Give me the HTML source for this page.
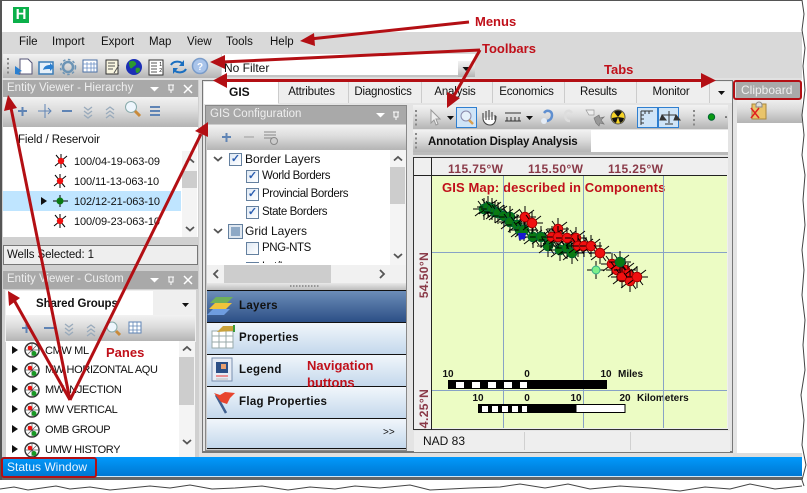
<!DOCTYPE html>
<html><head><meta charset="utf-8"><style>
html,body{margin:0;padding:0;background:#fff}
#p{position:relative;width:807px;height:493px;overflow:hidden;background:#fff;font-family:"Liberation Sans",sans-serif;font-size:11.5px;color:#111}
#p div{position:absolute;box-sizing:border-box}
.t{white-space:nowrap;line-height:14px}
.tb{background:linear-gradient(#f2f2f2,#dcdcdc 45%,#b4b4b4)}
.ti{background:#a9a9a9;color:#eee;font-size:11.5px;line-height:17px;padding-left:4px;white-space:nowrap}
.tab{top:82px;height:21px;background:#eee;border-left:1px solid #ccc;text-align:center;line-height:21px;font-size:11.5px;letter-spacing:-.2px;padding-right:4px}
.nav{left:207px;width:199px;height:32px;background:linear-gradient(#f1f6fb,#c4d8ec);border-bottom:1px solid #111;font-weight:bold;font-size:11.5px;letter-spacing:.3px;line-height:30px;padding-left:32px}
.red{color:#c0101a;font-weight:bold;white-space:nowrap;font-size:13px;line-height:15px}
.ax{color:#8a3a48;font-weight:bold;font-size:12px;letter-spacing:.4px;line-height:14px;white-space:nowrap}
.sc{font-weight:bold;font-size:10px;line-height:12px;white-space:nowrap;color:#111;text-align:center}
.cb{width:13px;height:13px;border:1px solid #64809f;background:linear-gradient(135deg,#dfe9f4,#fff);color:#2a5db0;font-size:11px;font-weight:bold;line-height:11px;text-align:center}
.li{font-size:11px;letter-spacing:-.1px}
.cu{font-size:11px;letter-spacing:-.35px}
.su{letter-spacing:-.4px}
svg{position:absolute;left:0;top:0;overflow:visible}
</style></head><body><div id="p">

<!-- window frame -->
<div style="left:0;top:0;width:802px;height:1px;background:#555"></div>
<div style="left:0;top:0;width:2px;height:480px;background:#555"></div>
<div style="left:13px;top:7px;width:16px;height:16px;background:#0bb04a;color:#fff;font-weight:bold;font-size:15px;line-height:16px;text-align:center">H</div>

<!-- menu & toolbar band -->
<div style="left:2px;top:32px;width:800px;height:48px;background:#d9d9d9"></div>
<div class="t" style="left:19px;top:35px">File</div>
<div class="t" style="left:52px;top:35px">Import</div>
<div class="t" style="left:101px;top:35px">Export</div>
<div class="t" style="left:149px;top:35px">Map</div>
<div class="t" style="left:187px;top:35px">View</div>
<div class="t" style="left:226px;top:35px">Tools</div>
<div class="t" style="left:270px;top:35px">Help</div>

<div class="tb" style="left:3px;top:54px;width:218px;height:24px"></div>
<div style="left:222px;top:54px;width:253px;height:23px;background:#fff;border-bottom:2px solid #c4c4c4"></div>
<div class="t" style="left:224px;top:61px;font-size:12px">No Filter</div>
<div class="tb" style="left:458px;top:61px;width:17px;height:16px"></div>

<!-- main bg -->
<div style="left:2px;top:78px;width:800px;height:379px;background:#e1e1e1"></div>

<!-- Left pane hierarchy -->
<div style="left:2px;top:80px;width:197px;height:377px;background:#d0d0d0"></div>
<div class="ti" style="left:3px;top:80px;width:195px;height:17px">Entity Viewer - Hierarchy</div>
<div class="tb" style="left:3px;top:97px;width:195px;height:30px"></div>
<div style="left:3px;top:127px;width:195px;height:110px;background:#fff"></div>
<div class="t" style="left:18px;top:133px;letter-spacing:-.1px">Field / Reservoir</div>
<div style="left:3px;top:191px;width:178px;height:20px;background:#bfe5ff"></div>
<div style="left:182px;top:151px;width:15px;height:86px;background:#f4f4f4"></div>
<div style="left:182px;top:171px;width:15px;height:17px;background:#cdcdcd"></div>
<div class="t li" style="left:74px;top:155px">100/04-19-063-09</div>
<div class="t li" style="left:74px;top:175px">100/11-13-063-10</div>
<div class="t li" style="left:74px;top:195px">102/12-21-063-10</div>
<div class="t li" style="left:74px;top:215px">100/09-23-063-10</div>
<div style="left:3px;top:245px;width:195px;height:20px;background:#eee;border:1px solid #777"></div>
<div class="t" style="left:7px;top:248px;letter-spacing:-.1px">Wells Selected: 1</div>

<!-- Left pane custom -->
<div class="ti" style="left:3px;top:271px;width:195px;height:18px">Entity Viewer - Custom</div>
<div style="left:5px;top:290px;width:191px;height:52px;background:#efefef"></div>
<div style="left:6px;top:291px;width:147px;height:24px;background:#fff"></div>
<div class="t" style="left:36px;top:297px;font-weight:bold;font-size:11.5px;letter-spacing:-.1px">Shared Groups</div>
<div class="tb" style="left:6px;top:315px;width:189px;height:26px"></div>
<div style="left:6px;top:341px;width:189px;height:116px;background:#fff"></div>
<div style="left:179px;top:341px;width:16px;height:116px;background:#f4f4f4"></div>
<div style="left:179px;top:357px;width:15px;height:48px;background:#cdcdcd"></div>
<div class="t cu" style="left:45px;top:344px">CMW ML</div>
<div class="t cu" style="left:45px;top:363px">MW HORIZONTAL AQU</div>
<div class="t cu" style="left:45px;top:383px">MW INJECTION</div>
<div class="t cu" style="left:45px;top:403px">MW VERTICAL</div>
<div class="t cu" style="left:45px;top:423px">OMB GROUP</div>
<div class="t cu" style="left:45px;top:443px;height:13px;overflow:hidden">UMW HISTORY</div>

<!-- Status -->
<div style="left:2px;top:457px;width:800px;height:19px;background:linear-gradient(#0199fb,#0078d2)"></div>
<div style="left:2px;top:476px;width:800px;height:1px;background:#cfe6f5"></div>
<div style="left:2px;top:477px;width:800px;height:3px;background:#666"></div>
<div class="t" style="left:7px;top:460px;color:#e8f4ff;font-size:12px">Status Window</div>

<!-- Center frame -->
<div style="left:202px;top:80px;width:531px;height:373px;background:#e4e4e4;border:1px solid #777;border-width:1px 1px 2px 1px"></div>
<div style="left:204px;top:82px;width:74px;height:22px;background:#fff"></div>
<div class="t" style="left:229px;top:85px;font-weight:bold;font-size:12px">GIS</div>
<div class="tab" style="left:278px;width:70px">Attributes</div>
<div class="tab" style="left:348px;width:73px">Diagnostics</div>
<div class="tab" style="left:421px;width:71px">Analysis</div>
<div class="tab" style="left:492px;width:72px">Economics</div>
<div class="tab" style="left:564px;width:72px">Results</div>
<div class="tab" style="left:636px;width:73px">Monitor</div>
<div class="tab" style="left:709px;width:23px"></div>

<!-- GIS config -->
<div style="left:205px;top:105px;width:202px;height:346px;background:#ccc;border:1px solid #888"></div>
<div class="ti" style="left:206px;top:106px;width:200px;height:18px">GIS Configuration</div>
<div class="tb" style="left:207px;top:125px;width:199px;height:25px"></div>
<div style="left:207px;top:150px;width:183px;height:115px;background:#fff"></div>
<div style="left:207px;top:150px;width:183px;height:113px;overflow:hidden">
 <div class="cb" style="left:22px;top:3px">✓</div>
 <div class="t" style="left:38px;top:2px;font-size:12px">Border Layers</div>
 <div class="cb" style="left:39px;top:20px">✓</div>
 <div class="t su" style="left:55px;top:19px">World Borders</div>
 <div class="cb" style="left:39px;top:38px">✓</div>
 <div class="t su" style="left:55px;top:37px">Provincial Borders</div>
 <div class="cb" style="left:39px;top:56px">✓</div>
 <div class="t su" style="left:55px;top:55px">State Borders</div>
 <div class="cb" style="left:22px;top:75px;background:#8ea9c6;border:2px solid #dfe7f0;outline:1px solid #64809f"></div>
 <div class="t" style="left:38px;top:74px;font-size:12px">Grid Layers</div>
 <div class="cb" style="left:39px;top:92px"></div>
 <div class="t su" style="left:55px;top:91px">PNG-NTS</div>
 <div class="cb" style="left:39px;top:112px">✓</div>
 <div class="t su" style="left:55px;top:110px">Lat/Long</div>
</div>
<div style="left:390px;top:150px;width:16px;height:115px;background:#f4f4f4"></div>
<div style="left:390px;top:167px;width:15px;height:37px;background:#cdcdcd"></div>
<div style="left:207px;top:265px;width:199px;height:18px;background:#f1f1f1"></div>
<div style="left:224px;top:265px;width:107px;height:18px;background:#cdcdcd"></div>
<div style="left:207px;top:283px;width:199px;height:7px;background:linear-gradient(#e8e8e8,#bdbdbd)"></div>
<div style="left:207px;top:290px;width:199px;height:1px;background:#111"></div>
<div class="nav" style="top:291px;background:linear-gradient(#6c8db8,#2c4f86)">Layers</div>
<div class="nav" style="top:323px">Properties</div>
<div class="nav" style="top:355px">Legend</div>
<div class="nav" style="top:387px">Flag Properties</div>
<div class="nav" style="top:419px;height:30px"></div>
<div class="t" style="left:383px;top:426px;font-size:10px">&gt;&gt;</div>

<!-- GIS right -->
<div class="tb" style="left:413px;top:105px;width:315px;height:24px"></div>
<div style="left:456px;top:107px;width:21px;height:21px;background:#cfe4f7;border:1px solid #2f7fd0"></div>
<div style="left:637px;top:107px;width:21px;height:21px;background:#cfe4f7;border:1px solid #2f7fd0"></div>
<div style="left:658px;top:107px;width:21px;height:21px;background:#cfe4f7;border:1px solid #2f7fd0"></div>
<div style="left:413px;top:130px;width:315px;height:22px;background:#fff"></div>
<div class="tb" style="left:413px;top:130px;width:178px;height:22px"></div>
<div class="t" style="left:428px;top:135px;font-weight:bold;font-size:11.5px;letter-spacing:-.2px">Annotation Display Analysis</div>
<div style="left:413px;top:152px;width:315px;height:3px;background:#bbb"></div>

<!-- Map -->
<div style="left:413px;top:157px;width:315px;height:273px;background:#efefef;border:1px solid #333;border-width:1px 0 1px 1px"></div>
<div style="left:432px;top:176px;width:295px;height:252px;background:#ecfcc4;overflow:hidden"></div>
<div style="left:431px;top:157px;width:1px;height:273px;background:#222"></div>
<div style="left:414px;top:175px;width:313px;height:1px;background:#222"></div>
<div class="ax" style="left:448px;top:162px">115.75°W</div>
<div class="ax" style="left:528px;top:162px">115.50°W</div>
<div class="ax" style="left:608px;top:162px">115.25°W</div>
<div style="left:414px;top:176px;width:17px;height:253px;overflow:hidden">
 <div class="ax" style="left:-20px;top:92px;width:60px;height:14px;text-align:center;transform:rotate(-90deg)">54.50°N</div>
 <div class="ax" style="left:-20px;top:229px;width:60px;height:14px;text-align:center;transform:rotate(-90deg)">54.25°N</div>
</div>
<div class="red" style="left:442px;top:180px;font-size:13px;letter-spacing:.12px">GIS Map: described in Components</div>

<div class="sc" style="left:438px;top:369px;width:20px">10</div>
<div class="sc" style="left:517px;top:369px;width:20px">0</div>
<div class="sc" style="left:596px;top:369px;width:20px">10</div>
<div class="sc" style="left:618px;top:369px">Miles</div>
<div class="sc" style="left:468px;top:393px;width:20px">10</div>
<div class="sc" style="left:517px;top:393px;width:20px">0</div>
<div class="sc" style="left:566px;top:393px;width:20px">10</div>
<div class="sc" style="left:615px;top:393px;width:20px">20</div>
<div class="sc" style="left:637px;top:393px">Kilometers</div>

<!-- map status -->
<div style="left:414px;top:431px;width:316px;height:21px;background:#eee"></div>
<div style="left:524px;top:432px;width:1px;height:18px;background:#d0d0d0"></div>
<div style="left:630px;top:432px;width:1px;height:18px;background:#d0d0d0"></div>
<div class="t" style="left:423px;top:434px;font-size:12px">NAD 83</div>

<!-- Clipboard -->
<div style="left:733px;top:80px;width:69px;height:373px;background:#fff"></div>
<div style="left:733px;top:80px;width:4px;height:373px;background:#e4e4e4"></div>
<div style="left:733px;top:453px;width:69px;height:4px;background:#ddd"></div>
<div style="left:736px;top:82px;width:65px;height:16px;background:#a9a9a9;color:#eee;font-size:12px;line-height:16px;padding-left:5px">Clipboard</div>
<div class="tb" style="left:737px;top:98px;width:65px;height:25px"></div>

<svg width="807" height="493" viewBox="0 0 807 493">
<defs>
 <g id="g"><path d="M-9 7L9-7M-6-8L6 8M0-11V11M-11 0H11" stroke="#000" stroke-width="1"/><circle r="4.800" fill="#0a7a12" stroke="#063"/></g>
 <g id="r"><path d="M-9 7L9-7M-6-8L6 8M0-11V11M-11 0H11" stroke="#000" stroke-width="1"/><circle r="4.800" fill="#f01010" stroke="#a00"/></g>
 <g id="ws"><path d="M-6 5L6-5M-5-6L5 6M0-7V7" stroke="#000"/><circle r="3.200" fill="#f01010"/></g>
 <g id="grp"><circle r="7" fill="#fff" stroke="#333" stroke-width="1.400"/><path d="M-5-5L5 5M5-5L-5 5M0-7V7M-7 0H7" stroke="#555" stroke-width=".7"/><circle cx="-2" cy="-2" r="2.300" fill="#e11"/><circle cx="2" cy="3.500" r="2.500" fill="#1a9a25"/></g>
 <path id="ra" d="M0 0L6 4L0 8Z" fill="#111"/>
 <path id="dn" d="M0 0L4 3.500L8 0" fill="none" stroke="#555" stroke-width="1.800"/>
 <path id="up" d="M0 3.500L4 0L8 3.500" fill="none" stroke="#555" stroke-width="1.800"/>
 <path id="tri" d="M0 0H9L4.500 4.500Z" fill="#fff"/>
 <path id="tb" d="M0 0H7L3.500 4Z" fill="#111"/>
</defs>

<!-- grip dots main toolbar -->
<path d="M8 58V76" stroke="#888" stroke-width="2" stroke-dasharray="2 2.500"/>
<!-- main toolbar icons -->
<path d="M20 59h8l4 4v11H20z" fill="#fff" stroke="#557"/><path d="M15 66l7 5-3 1 1 3-5-1z" fill="#2a7fd0"/>
<rect x="39" y="62" width="14" height="12" fill="#e5f0fa" stroke="#3b7cb5" stroke-width="1.500"/><path d="M43 70c1-4 4-5 7-5v-2l4 4-4 4v-2c-3 0-5 0-7 1z" fill="#2a7fd0"/>
<circle cx="68" cy="67" r="5" fill="none" stroke="#6c94b5" stroke-width="2.500"/><circle cx="68" cy="67" r="7.500" fill="none" stroke="#6c94b5" stroke-width="1.500" stroke-dasharray="2.500 2.500"/>
<rect x="83" y="60" width="14" height="12" fill="#fff" stroke="#4a6fa5"/><path d="M83 64h14M83 68h14M87 62v10M91 62v10M94 62v10" stroke="#6a8fc5" stroke-width=".8"/>
<rect x="106" y="60" width="12" height="14" fill="#f8f5e0" stroke="#333"/><path d="M108 63h7M108 66h7M108 69h5M114 73l5-8" stroke="#555"/>
<circle cx="134" cy="67" r="8" fill="#1b2fb5"/><path d="M129 62c3-2 6-1 7 1s-2 3-4 5-3-3-3-6zM136 68c3-1 4 0 4 2s-2 3-3 3-2-3-1-5z" fill="#2d9a2d"/>
<rect x="149" y="60" width="14" height="15" fill="#fff" stroke="#333"/><path d="M151 63h6M151 66h6M151 69h6M151 72h6" stroke="#555"/><text x="162" y="66" font-size="5" font-family="Liberation Sans" text-anchor="end">1</text><text x="162" y="72" font-size="5" font-family="Liberation Sans" text-anchor="end">2</text>
<path d="M171 65c2-4 8-4 11-2M186 69c-2 4-8 4-11 2" fill="none" stroke="#1b6fc0" stroke-width="2"/><path d="M184 60v6h-5zM173 74v-6h5z" fill="#1b6fc0"/>
<circle cx="200" cy="66" r="7.500" fill="#a9c4ea" stroke="#7a9cc9" stroke-width="1.500"/><text x="200" y="70" font-size="10" font-weight="bold" fill="#fff" font-family="Liberation Sans" text-anchor="middle">?</text>
<use href="#tb" x="462.500" y="67"/>

<!-- Title bar glyphs -->
<use href="#tri" x="150" y="87"/><path d="M168 85h6M169 85v5h4v-5M171 90v3" stroke="#fff" fill="none"/><path d="M184 85l8 8M192 85l-8 8" stroke="#fff" stroke-width="1.500"/>
<use href="#tri" x="150" y="278"/><path d="M168 277h6M169 277v5h4v-5M171 282v3" stroke="#fff" fill="none"/><path d="M184 276l8 8M192 276l-8 8" stroke="#fff" stroke-width="1.500"/>
<use href="#tri" x="376" y="113"/><path d="M393 112h6M394 112v5h4v-5M396 117v3" stroke="#fff" fill="none"/>
<use href="#tb" x="182" y="303"/>
<use href="#tb" x="718" y="91"/>

<!-- Hierarchy toolbar -->
<g stroke="#5f84b5" stroke-width="2" fill="none">
<path d="M18 111h9M22.500 107v9"/><path d="M62 111h10"/><path d="M150 107h10M150 111h10M150 115h10"/>
<path d="M38 111h13M45 104v14M48 108l3 3-3 3" stroke-width="1"/>
<path d="M84 107l4 3 4-3M84 111l4 3 4-3M84 115l4 3 4-3" stroke="#9ab" stroke-width="1.300"/>
<path d="M106 110l4-3 4 3M106 114l4-3 4 3M106 118l4-3 4 3" stroke="#9ab" stroke-width="1.300"/>
</g>
<circle cx="131" cy="107" r="5.500" fill="#eef6fd" stroke="#8aa"/><path d="M135 111l5 5" stroke="#c98a3a" stroke-width="3"/>
<!-- Hierarchy list -->
<use href="#ws" x="61" y="161"/><use href="#ws" x="60" y="181"/><use href="#ws" x="60" y="221"/>
<path d="M53 201H68M60 195V207" stroke="#000"/><circle cx="60" cy="201" r="3.500" fill="#0a7a12"/>
<use href="#ra" x="41" y="197"/>
<use href="#up" x="186" y="159"/><use href="#dn" x="186" y="227"/>

<!-- Custom toolbar -->
<path d="M22 328h9M26.500 324v9M44 328h10" stroke="#5f84b5" stroke-width="2" fill="none"/>
<path d="M65 324l4 3 4-3M65 328l4 3 4-3M65 332l4 3 4-3M87 328l4-3 4 3M87 332l4-3 4 3M87 336l4-3 4 3" stroke="#9ab" stroke-width="1.300" fill="none"/>
<circle cx="112" cy="327" r="5" fill="#eef6fd" stroke="#8aa"/><path d="M116 331l4 4" stroke="#c98a3a" stroke-width="3"/>
<rect x="129" y="322" width="12" height="11" fill="#fff" stroke="#5f84b5"/><path d="M129 326h12M129 330h12M133 322v11M137 322v11" stroke="#5f84b5" stroke-width=".8"/>
<!-- custom rows -->
<use href="#ra" x="12" y="346"/><use href="#grp" x="32" y="350"/>
<use href="#ra" x="12" y="365"/><use href="#grp" x="32" y="370"/>
<use href="#ra" x="12" y="385"/><use href="#grp" x="32" y="390"/>
<use href="#ra" x="12" y="405"/><use href="#grp" x="32" y="410"/>
<use href="#ra" x="12" y="425"/><use href="#grp" x="32" y="430"/>
<use href="#ra" x="12" y="445"/><use href="#grp" x="32" y="450"/>
<use href="#up" x="183" y="347"/><use href="#dn" x="183" y="440"/>

<!-- GIS config toolbar -->
<path d="M222 137h9M226.500 133v9" stroke="#5f84b5" stroke-width="2"/><path d="M244 137h10" stroke="#bbb" stroke-width="2"/>
<path d="M264 132h12M264 135h12M264 138h12" stroke="#888"/><circle cx="274" cy="141" r="3.500" fill="#ccc" stroke="#888"/>
<!-- tree chevrons / scroll -->
<use href="#dn" x="214" y="157"/><use href="#dn" x="214" y="229"/>
<use href="#up" x="394" y="157"/><use href="#dn" x="394" y="254"/>
<path d="M218 270l-4 4 4 4M380 270l4 4-4 4" fill="none" stroke="#555" stroke-width="1.800"/>
<path d="M290 286h30" stroke="#555" stroke-dasharray="1.500 1.500"/>

<!-- nav icons -->
<path d="M216 297h17l-6 6h-17z" fill="#6fb05a"/><path d="M215 303h17l-6 6h-17z" fill="#efc33c"/><path d="M213 309h17l-6 6h-17z" fill="#6e9de0"/>
<rect x="212" y="331" width="21" height="17" fill="#fff" stroke="#9aa"/><path d="M212 336h21M212 342h21M219 331v17M226 331v17" stroke="#9aa"/><path d="M217 332l6-6h10v5z" fill="#c9a23c"/><rect x="233" y="325" width="2" height="7" fill="#3a9a3a"/>
<rect x="212" y="358" width="20" height="23" fill="#e7ecf5" stroke="#7a8fb0"/><rect x="216" y="362" width="12" height="11" fill="#2c4f86"/><rect x="221" y="364" width="5" height="5" fill="#e9a070"/><path d="M216 376h12" stroke="#e33" stroke-width="1"/><path d="M216 379h12" stroke="#bbb"/>
<path d="M226 413L216 395" stroke="#3f5f8f" stroke-width="2.500"/><path d="M214 393l6 2 5-3 10 1-5 5-3 6-6-2z" fill="#e8452e"/>

<!-- GIS toolbar -->
<path d="M416 110V126" stroke="#888" stroke-width="2" stroke-dasharray="2 2.500"/><path d="M416 133V149" stroke="#888" stroke-width="2" stroke-dasharray="2 2.500"/>
<path d="M431 110v13l3-3 2 5 2-1-2-5h4z" fill="#eee" stroke="#999"/><use href="#tb" x="447" y="116"/>
<circle cx="466" cy="116" r="5" fill="#e5f0fa" stroke="#88a"/><path d="M469 120l4 4" stroke="#d9a050" stroke-width="2.500"/>
<path d="M483 118v-5M486 120v-9M489 120v-10M492 120v-8M495 120v-5M483 118c0 4 3 7 7 7s6-3 6-9" fill="#fff" stroke="#444" stroke-width="1.100"/>
<path d="M505 113h16M505 121h16M507 117v4M511 117v4M515 117v4M519 117v4" stroke="#333"/><use href="#tb" x="526" y="116"/>
<path d="M544 113c3-4 8-2 8 2s-3 6-6 6" fill="none" stroke="#5f8fd0" stroke-width="2.500"/><circle cx="544" cy="121" r="3" fill="#e5ecf5"/>
<path d="M572 113c-3-4-7-2-7 2s2 6 5 6" fill="none" stroke="#ddd" stroke-width="2.500"/>
<path d="M586 110h8v5h-5z" fill="#eee" stroke="#999" stroke-width=".7"/><path d="M594 118l5-3 1 3 4-1-3 3 3 4-4-1-1 3-3-3z" fill="#999" stroke="#777" stroke-width=".7"/>
<circle cx="618" cy="117" r="7" fill="#f5d327" stroke="#555"/><path d="M618 117l-4-5a6 6 0 0 1 8 0zM618 117l6 1a6 6 0 0 1-4 5zM618 117l-6 1a6 6 0 0 0 4 5z" fill="#111"/>
<path d="M641 111v14M641 111h12M641 115h3M641 119h3M641 123h3M645 111v3M649 111v3" stroke="#333" fill="none"/>
<path d="M662 115h14M669 111v12M665 124h8M662 115l-2 5h6zM676 115l-2 5h6z" stroke="#333" fill="#333"/>
<path d="M694 110V126" stroke="#888" stroke-width="2" stroke-dasharray="2 2.500"/>
<circle cx="711.500" cy="117" r="3.200" fill="#0a9a12" stroke="#063"/><circle cx="726" cy="117" r=".8" fill="#111"/>

<!-- clipboard icon -->
<rect x="752" y="104" width="14" height="15" fill="#e9c46a" stroke="#a9863c"/><path d="M756 105a3 3 0 0 1 6 0v2h-6z" fill="#ddd" stroke="#888"/><path d="M751 108l8 10M759 108l-8 10" stroke="#e02020" stroke-width="1.500"/>

<!-- map grid -->
<path d="M503.500 176V428M583.500 176V428M663.500 176V428M432 252.500H727M432 390.500H727" stroke="#88a2c6"/>
<!-- scale bars -->
<rect x="448" y="380" width="159" height="9" fill="#000"/>
<path d="M456 382h8v6h-8zM472 382h8v6h-8zM488 382h8v6h-8zM504 382h8v6h-8zM520 382h7v6h-7z" fill="#fff"/>
<rect x="478" y="404" width="98" height="9" fill="#000"/><rect x="576" y="404.500" width="49" height="8" fill="#fff" stroke="#000"/>
<path d="M482 406h6v6h-6zM492 406h6v6h-6zM502 406h6v6h-6zM512 406h6v6h-6zM522 406h5v6h-5z" fill="#fff"/>

<!-- wells -->
<use href="#g" x="484" y="209"/><use href="#g" x="488" y="207"/><use href="#g" x="492" y="209"/><use href="#g" x="495" y="212"/><use href="#g" x="498" y="213"/><use href="#g" x="504" y="216"/><use href="#g" x="510" y="217"/><use href="#g" x="510" y="222"/><use href="#g" x="517" y="225"/><use href="#g" x="520" y="230"/><use href="#g" x="524" y="230"/><use href="#g" x="533" y="237"/><use href="#g" x="541" y="237"/><use href="#g" x="548" y="246"/><use href="#g" x="550" y="240"/><use href="#g" x="560" y="250"/><use href="#g" x="567" y="248"/><use href="#g" x="572" y="253"/>
<use href="#r" x="525" y="217"/><use href="#r" x="532" y="223"/><use href="#r" x="558" y="229"/><use href="#r" x="552" y="237"/><use href="#r" x="558" y="237"/><use href="#r" x="567" y="238"/><use href="#r" x="576" y="238"/><use href="#r" x="578" y="246"/><use href="#r" x="584" y="246"/><use href="#r" x="591" y="246"/><use href="#r" x="600" y="253"/><use href="#r" x="612" y="264"/><use href="#r" x="617" y="270"/><use href="#r" x="625" y="270"/><use href="#r" x="628" y="274"/><use href="#r" x="622" y="277"/><use href="#r" x="630" y="281"/><use href="#r" x="637" y="277"/>
<use href="#g" x="620" y="262"/>
<path d="M518 233l8 0-1 6-6 1z" fill="#1a1ad0"/>
<path d="M587 270H605M596 261V279" stroke="#000"/><circle cx="596" cy="270" r="4" fill="#7cf08a" stroke="#3a8"/>

<!-- annotation arrows -->
<g stroke="#b30f14" stroke-width="3" fill="#b30f14">
<path d="M469 22L310 39" fill="none"/><path d="M300 41L314 33L315 46Z" stroke="none"/>
<path d="M480 50L222 62" fill="none"/><path d="M210 62L225 55L225 69Z" stroke="none"/>
<path d="M480 50L451 101" fill="none"/><path d="M447 108L447 92L460 98Z" stroke="none"/>
<path d="M226 80.500H706" fill="none"/><path d="M213 80.500L227 73V88Z" stroke="none"/><path d="M716 80.500L701 73V88Z" stroke="none"/>
<path d="M70 400L11 108" fill="none"/><path d="M8 95L17 108L4 111Z" stroke="none"/>
<path d="M70 400L14 300" fill="none"/><path d="M8 291L20 298L9 306Z" stroke="none"/>
<path d="M70 400L201 134" fill="none"/><path d="M208 122L208 137L195 131Z" stroke="none"/>
</g>
<rect x="734" y="81" width="67" height="18" rx="2" fill="none" stroke="#b30f14" stroke-width="2"/>
<rect x="2" y="458" width="94" height="19" rx="2" fill="none" stroke="#b30f14" stroke-width="2"/>

<!-- torn edges -->
<path d="M0 489L14 487L28 490L42 488L56 486L70 489L90 487L110 490L130 488L150 486L170 488L190 485L212 489L235 488L262 486L288 490L310 487L335 489L355 486L380 488L410 485L430 490L470 488L500 487L520 484L545 488L568 484L590 489L620 486L650 488L680 491L705 487L730 489L750 484L775 489L802 486" fill="none" stroke="#444" stroke-width="1"/>
<path d="M802 0L804 14L802 30L805 48L803 66L805 90L802 115L804 135L802 155L805 175L803 200L805 225L802 250L804 270L802 295L805 320L803 345L805 370L801 395L804 420L802 445L806 465L802 480L804 486" fill="none" stroke="#444" stroke-width="1"/>
</svg>

<div class="red" style="left:475px;top:14px">Menus</div>
<div class="red" style="left:482px;top:41px">Toolbars</div>
<div class="red" style="left:604px;top:62px">Tabs</div>
<div class="red" style="left:106px;top:345px">Panes</div>
<div class="red" style="left:307px;top:357px;line-height:17px;white-space:normal;width:90px">Navigation buttons</div>
</div></body></html>
